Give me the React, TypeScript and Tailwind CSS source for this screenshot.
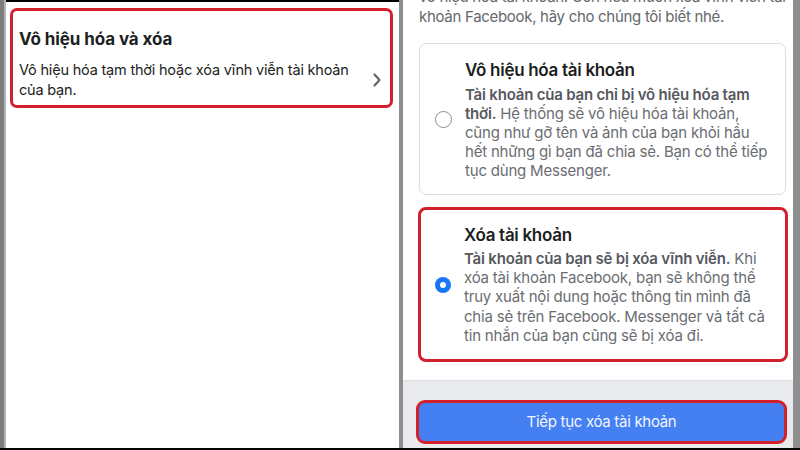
import React from "react";

const font = { fontFamily: "Inter, 'Noto Sans', sans-serif" };

function Radio({ checked }: { checked: boolean }) {
  return checked ? (
    <div className="w-[16px] h-[16px] rounded-full bg-[#1877f2] flex items-center justify-center shrink-0">
      <div className="w-[6px] h-[6px] rounded-full bg-white" />
    </div>
  ) : (
    <div className="w-[17px] h-[17px] rounded-full border-[1.5px] border-[#8a8d91] bg-white shrink-0" />
  );
}

export default function App() {
  return (
    <div className="w-[800px] h-[450px] flex flex-col bg-black overflow-hidden" style={font}>
      <div className="flex h-[448px]">
        {/* left bezel */}
        <div className="w-[4px] bg-[#7d7d7d]" />
        <div className="w-[2px] bg-[#b5b5b5]" />
        {/* left panel */}
        <div className="w-[393px] bg-white border-t-[2px] border-black pt-[6px] pl-[4px] pr-[6px]">
          <div className="h-[100px] border-[3px] border-[#d3202d] rounded-[7px] pl-[6px] pr-[6px] pt-[17px]">
            <div className="text-[17px] leading-[22px] font-bold text-[#1c1e21] tracking-[-0.1px]">
              Vô hiệu hóa và xóa
            </div>
            <div className="flex items-center mt-[10px]">
              <div className="flex-1 text-[14.5px] leading-[20px] text-[#1c1e21] tracking-[-0.2px] whitespace-nowrap">
                Vô hiệu hóa tạm thời hoặc xóa vĩnh viễn tài khoản
                <br />
                của bạn.
              </div>
              <svg width="10" height="16" viewBox="0 0 10 16" className="ml-[10px] mr-[2px] shrink-0">
                <path d="M2.5 2.5 L7.5 8 L2.5 13.5" fill="none" stroke="#606770" strokeWidth="2.2" strokeLinecap="round" strokeLinejoin="round" />
              </svg>
            </div>
          </div>
        </div>
        {/* divider */}
        <div className="w-[4px] bg-[#8f8f8f]" />
        {/* right panel */}
        <div className="w-[390px] bg-white flex flex-col overflow-hidden">
          <div className="flex-1 pl-[16px] pr-[7px]">
            <div className="mt-[-13px] text-[15px] leading-[20px] text-[#65676b] tracking-[-0.3px] whitespace-nowrap">
              vô hiệu hóa tài khoản. Còn nếu muốn xóa vĩnh viễn tài
              <br />
              khoản Facebook, hãy cho chúng tôi biết nhé.
            </div>
            <div className="mt-[16px] h-[152px] border border-[#dadde1] rounded-[7px] flex items-center">
              <div className="w-[45px] flex justify-center pl-[2px]">
                <Radio checked={false} />
              </div>
              <div className="flex-1 pr-[10px]">
                <div className="text-[17px] leading-[22px] font-semibold text-[#1c1e21] tracking-[-0.3px]">
                  Vô hiệu hóa tài khoản
                </div>
                <div className="mt-[4px] text-[15px] leading-[19px] text-[#6a6d72] tracking-[-0.2px] whitespace-nowrap">
                  <span className="font-semibold text-[#55585e]">
                    Tài khoản của bạn chỉ bị vô hiệu hóa tạm
                    <br />
                    thời.
                  </span>{" "}
                  Hệ thống sẽ vô hiệu hóa tài khoản,
                  <br />
                  cũng như gỡ tên và ảnh của bạn khỏi hầu
                  <br />
                  hết những gì bạn đã chia sẻ. Bạn có thể tiếp
                  <br />
                  tục dùng Messenger.
                </div>
              </div>
            </div>
            <div className="mt-[12px] ml-[-1px] mr-[-2px] h-[155px] border-[3px] border-[#d3202d] rounded-[8px] flex items-center">
              <div className="w-[43px] flex justify-center">
                <Radio checked={true} />
              </div>
              <div className="flex-1 pr-[10px]">
                <div className="text-[17px] leading-[22px] font-semibold text-[#1c1e21] tracking-[-0.3px]">
                  Xóa tài khoản
                </div>
                <div className="mt-[3px] text-[15px] leading-[19.25px] text-[#6a6d72] tracking-[-0.2px] whitespace-nowrap">
                  <span className="font-semibold text-[#55585e]">Tài khoản của bạn sẽ bị xóa vĩnh viễn.</span> Khi
                  <br />
                  xóa tài khoản Facebook, bạn sẽ không thể
                  <br />
                  truy xuất nội dung hoặc thông tin mình đã
                  <br />
                  chia sẻ trên Facebook. Messenger và tất cả
                  <br />
                  tin nhắn của bạn cũng sẽ bị xóa đi.
                </div>
              </div>
            </div>
          </div>
          <div className="h-[68px] bg-[#e9eaee] border-t border-[#dcdee2] pt-[19px] pl-[13px] pr-[6px]">
            <div className="h-[44px] border-[3px] border-[#d3202d] rounded-[9px] bg-[#4580f3] flex items-center justify-center">
              <span className="text-[15px] text-[#f2f6ff] tracking-[-0.3px]">Tiếp tục xóa tài khoản</span>
            </div>
          </div>
        </div>
        {/* right bezel */}
        <div className="w-[7px] bg-[#8f8f8f]" />
      </div>
      <div className="h-[2px] bg-black" />
    </div>
  );
}
